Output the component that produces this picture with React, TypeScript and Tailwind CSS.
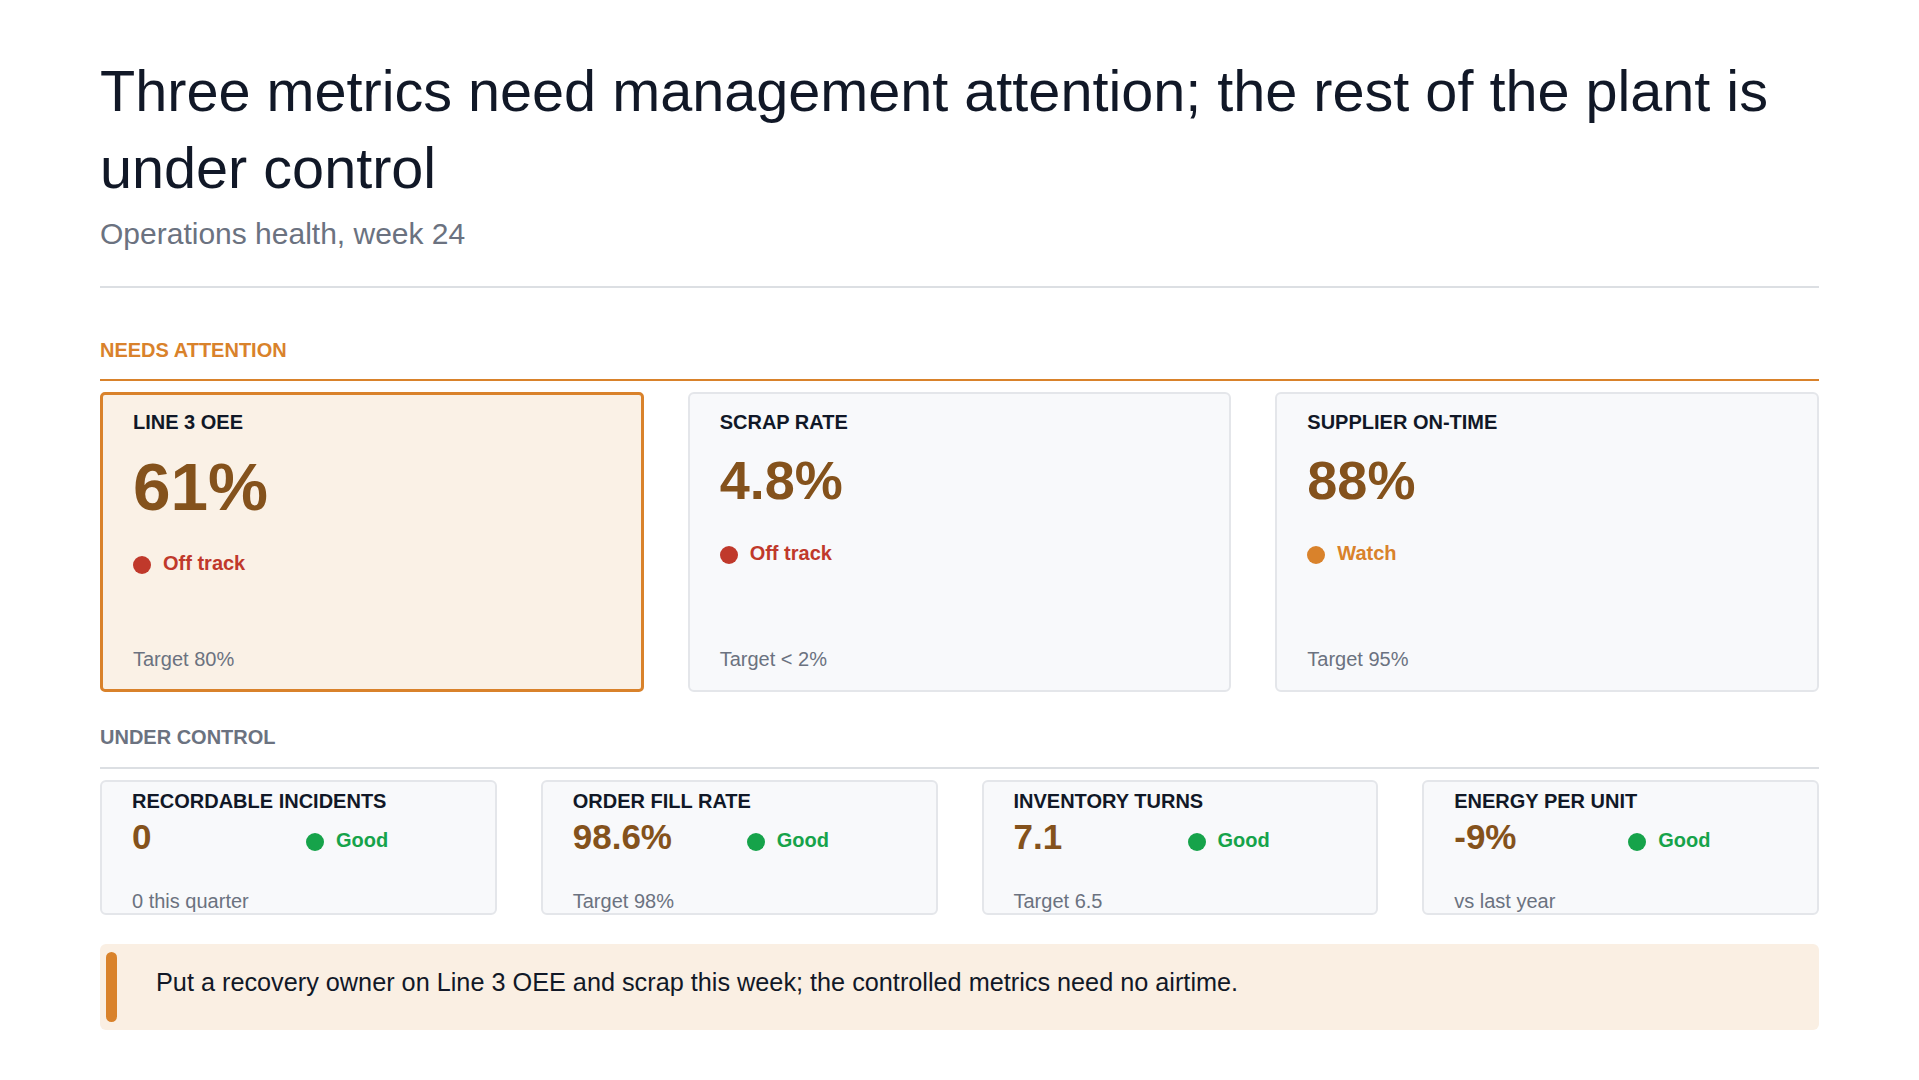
import React from "react";

type Tone = "red" | "amber" | "green";

interface Metric {
  label: string;
  value: string;
  status: string;
  tone: Tone;
  note: string;
}

const attention: Metric[] = [
  { label: "LINE 3 OEE", value: "61%", status: "Off track", tone: "red", note: "Target 80%" },
  { label: "SCRAP RATE", value: "4.8%", status: "Off track", tone: "red", note: "Target < 2%" },
  { label: "SUPPLIER ON-TIME", value: "88%", status: "Watch", tone: "amber", note: "Target 95%" },
];

const controlled: Metric[] = [
  { label: "RECORDABLE INCIDENTS", value: "0", status: "Good", tone: "green", note: "0 this quarter" },
  { label: "ORDER FILL RATE", value: "98.6%", status: "Good", tone: "green", note: "Target 98%" },
  { label: "INVENTORY TURNS", value: "7.1", status: "Good", tone: "green", note: "Target 6.5" },
  { label: "ENERGY PER UNIT", value: "-9%", status: "Good", tone: "green", note: "vs last year" },
];

const toneText: Record<Tone, string> = {
  red: "text-[#c0392b]",
  amber: "text-[#d9822b]",
  green: "text-[#16a34a]",
};

const toneDot: Record<Tone, string> = {
  red: "bg-[#c0392b]",
  amber: "bg-[#d9822b]",
  green: "bg-[#16a34a]",
};

function Status({ status, tone }: { status: string; tone: Tone }) {
  return (
    <div className="flex items-center gap-[12px]">
      <span className={`mt-[4px] h-[18px] w-[18px] shrink-0 rounded-full ${toneDot[tone]}`} />
      <span className={`text-[20px] leading-[28px] font-bold ${toneText[tone]}`}>{status}</span>
    </div>
  );
}

function AttentionCard({ metric, hero }: { metric: Metric; hero?: boolean }) {
  return (
    <div
      className={
        hero
          ? "flex h-[300px] flex-col rounded-[5px] border-[3px] border-[#d9822b] bg-[#faf1e6] px-[30px] pt-[13px] pb-[16px]"
          : "flex h-[300px] flex-col rounded-[6px] border-2 border-[#e4e6ea] bg-[#f8f9fb] px-[30px] pt-[14px] pb-[17px]"
      }
    >
      <div className="text-[20px] leading-[28px] font-bold text-[#111827]">{metric.label}</div>
      <div
        className={
          hero
            ? "mt-[17px] text-[67.5px] leading-none font-bold text-[#84521c]"
            : "mt-[17px] text-[54px] leading-none font-bold text-[#84521c]"
        }
      >
        {metric.value}
      </div>
      <div className={hero ? "mt-[28px]" : "mt-[32px]"}>
        <Status status={metric.status} tone={metric.tone} />
      </div>
      <div className="mt-auto text-[20px] leading-[28px] text-[#6b7280]">{metric.note}</div>
    </div>
  );
}

function ControlCard({ metric }: { metric: Metric }) {
  return (
    <div className="flex flex-col rounded-[6px] border-2 border-[#e4e6ea] bg-[#f8f9fb] px-[30px] pt-[5px]">
      <div className="text-[20px] leading-[28px] font-bold text-[#111827]">{metric.label}</div>
      <div className="mt-[4px] flex items-end">
        <div className="w-[174px] shrink-0 text-[35px] leading-none font-bold text-[#84521c]">
          {metric.value}
        </div>
        <Status status={metric.status} tone={metric.tone} />
      </div>
      <div className="mt-[35px] text-[20px] leading-[24px] text-[#6b7280]">{metric.note}</div>
    </div>
  );
}

export default function App() {
  return (
    <div className="min-h-[1080px] bg-white px-[100px] pt-[53px] pb-[40px] font-['Liberation_Sans',Arial,sans-serif]">
      <h1 className="text-[57.6px] leading-[77px] font-normal text-[#111827]">
        Three metrics need management attention; the rest of the plant is under control
      </h1>
      <p className="mt-[9px] text-[30px] leading-[36px] text-[#6b7280]">Operations health, week 24</p>

      <div className="mt-[34px] h-[2px] bg-[#dcdfe3]" />

      <div className="mt-[48px] border-b-2 border-[#d9822b] pb-[15px] text-[20px] leading-[28px] font-bold text-[#d9822b]">
        NEEDS ATTENTION
      </div>
      <div className="mt-[11px] grid grid-cols-3 gap-[44px]">
        {attention.map((m, i) => (
          <AttentionCard key={m.label} metric={m} hero={i === 0} />
        ))}
      </div>

      <div className="mt-[31px] border-b-2 border-[#dcdfe3] pb-[16px] text-[20px] leading-[28px] font-bold text-[#6b7280]">
        UNDER CONTROL
      </div>
      <div className="mt-[11px] grid grid-cols-4 gap-[44px]">
        {controlled.map((m) => (
          <ControlCard key={m.label} metric={m} />
        ))}
      </div>

      <div className="mt-[29px] flex items-start rounded-[6px] bg-[#faefe3] py-[8px] pl-[6px] pr-[24px]">
        <span className="h-[70px] w-[11px] shrink-0 rounded-full bg-[#d9822b]" />
        <p className="pt-[12px] pl-[39px] text-[25.25px] leading-[37.5px] text-[#111827]">
          Put a recovery owner on Line 3 OEE and scrap this week; the controlled metrics need no airtime.
        </p>
      </div>
    </div>
  );
}
